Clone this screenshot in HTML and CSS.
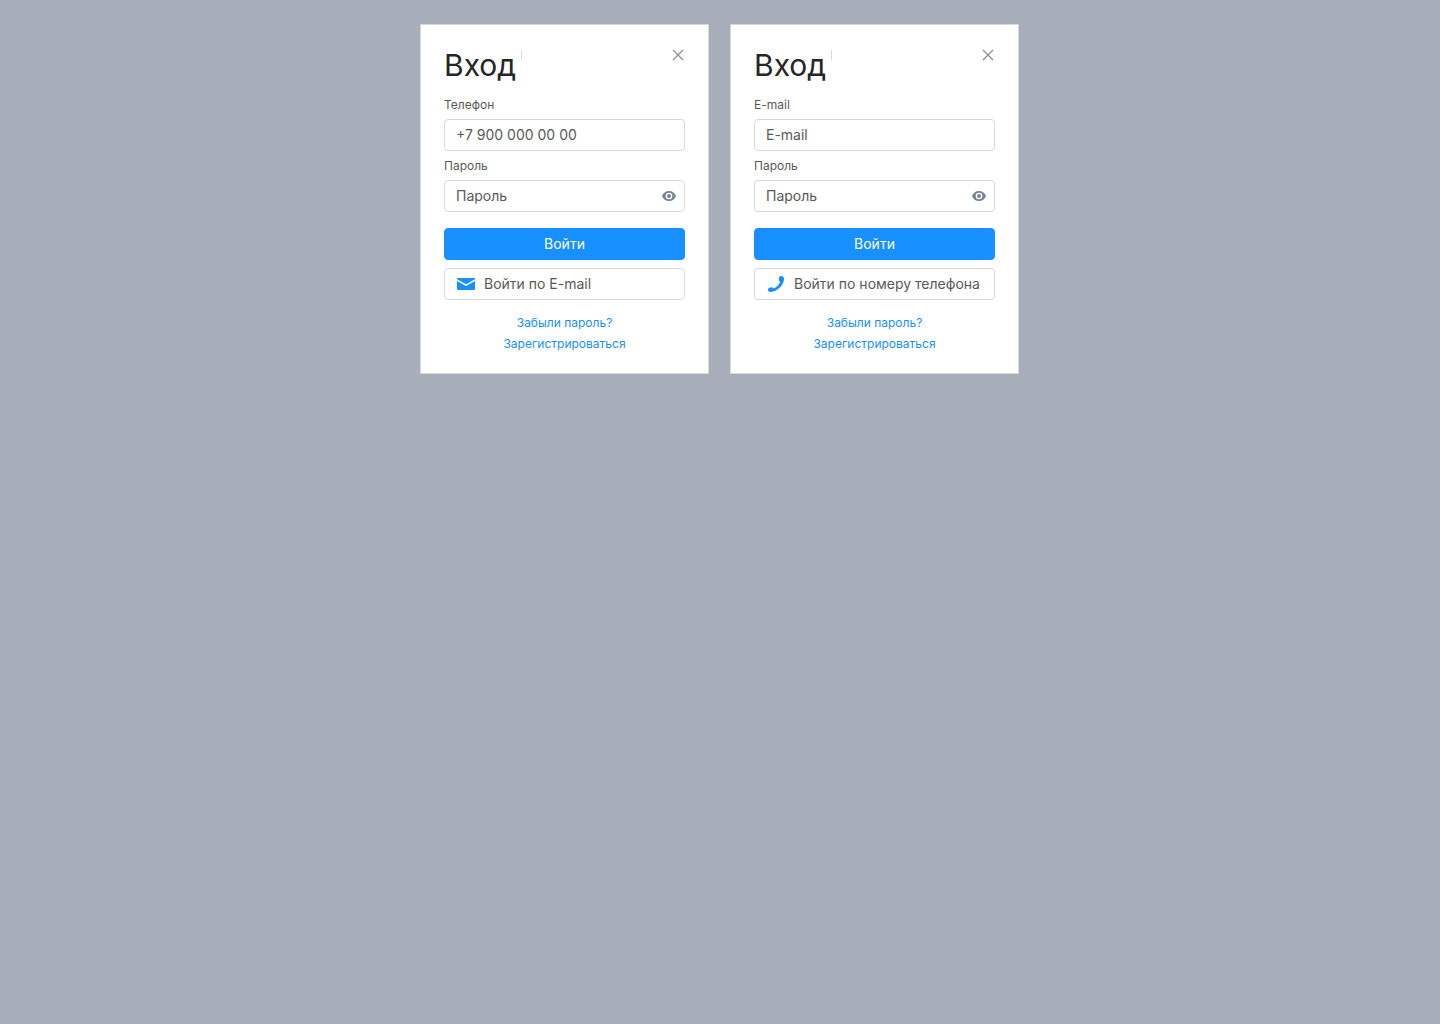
FILE: index.html
```
<!DOCTYPE html>
<html lang="ru">
<head>
    <meta charset="UTF-8">
    <meta name="viewport" content="width=device-width, initial-scale=1.0">
    <title>Вход</title>
    <link rel="stylesheet" href="styles.css">
</head>
<body>

    <main class="container">
        <!-- Login by phone -->
        <form class="card">
            <div class="card-header">
                <h1>Вход</h1>
                <span class="divider"></span>
                <button type="button" class="close-btn" aria-label="Закрыть">
                    <svg width="12" height="12" viewBox="0 0 12 12"><path d="M1 1l10 10M11 1L1 11" fill="none" stroke="currentColor" stroke-width="1.2"/></svg>
                </button>
            </div>

            <div class="field">
                <label for="phone">Телефон</label>
                <input type="tel" id="phone" placeholder="+7 900 000 00 00">
            </div>
            <div class="field">
                <label for="phonePassword">Пароль</label>
                <div class="password">
                    <input type="password" id="phonePassword" placeholder="Пароль">
                    <button type="button" class="eye-btn" aria-label="Показать пароль">
                        <svg width="14" height="10" viewBox="0 0 14 10"><path fill="currentColor" fill-rule="evenodd" d="M7 0C3.600 0 1 2 0 5c1 3 3.600 5 7 5s6-2 7-5c-1-3-3.600-5-7-5zM7 8.300a3.300 3.300 0 1 1 0-6.600 3.300 3.300 0 0 1 0 6.600zM7 3a2 2 0 1 0 0 4 2 2 0 0 0 0-4z"/></svg>
                    </button>
                </div>
            </div>

            <button type="submit" class="btn btn-primary">Войти</button>
            <button type="button" class="btn btn-outline">
                <svg width="20" height="16" viewBox="0 0 20 16"><path fill="currentColor" d="M1 2h18v1.300l-9 5-9-5zM1 4.900l9 5 9-5V13a1 1 0 0 1-1 1H2a1 1 0 0 1-1-1z"/></svg>
                <span>Войти по E-mail</span>
            </button>

            <div class="links">
                <a href="#">Забыли пароль?</a>
                <a href="#">Зарегистрироваться</a>
            </div>
        </form>

        <!-- Login by e-mail -->
        <form class="card">
            <div class="card-header">
                <h1>Вход</h1>
                <span class="divider"></span>
                <button type="button" class="close-btn" aria-label="Закрыть">
                    <svg width="12" height="12" viewBox="0 0 12 12"><path d="M1 1l10 10M11 1L1 11" fill="none" stroke="currentColor" stroke-width="1.2"/></svg>
                </button>
            </div>

            <div class="field">
                <label for="email">E-mail</label>
                <input type="email" id="email" placeholder="E-mail">
            </div>
            <div class="field">
                <label for="emailPassword">Пароль</label>
                <div class="password">
                    <input type="password" id="emailPassword" placeholder="Пароль">
                    <button type="button" class="eye-btn" aria-label="Показать пароль">
                        <svg width="14" height="10" viewBox="0 0 14 10"><path fill="currentColor" fill-rule="evenodd" d="M7 0C3.600 0 1 2 0 5c1 3 3.600 5 7 5s6-2 7-5c-1-3-3.600-5-7-5zM7 8.300a3.300 3.300 0 1 1 0-6.600 3.300 3.300 0 0 1 0 6.600zM7 3a2 2 0 1 0 0 4 2 2 0 0 0 0-4z"/></svg>
                    </button>
                </div>
            </div>

            <button type="submit" class="btn btn-primary">Войти</button>
            <button type="button" class="btn btn-outline">
                <svg width="20" height="16" viewBox="0 0 20 16"><path fill="currentColor" d="M13 1.500c.3-.9 1.300-1.500 2.300-1.500 1.600 0 2.700 1.200 2.700 2.900 0 3.100-1.700 6.300-4.200 8.700C11.200 14.300 7.900 16 4.800 16 3.100 16 2 15.200 2 13.800c0-1 .6-1.700 1.500-2l2-.5c.7-.1 1.200.1 1.600.8l.3.5c1.400-.6 2.800-1.500 4-2.700 1.300-1.300 2.200-2.700 2.800-4.200l-.6-.5c-.6-.4-.9-1-.8-1.700z"/></svg>
                <span>Войти по номеру телефона</span>
            </button>

            <div class="links">
                <a href="#">Забыли пароль?</a>
                <a href="#">Зарегистрироваться</a>
            </div>
        </form>
    </main>

</body>
</html>
```
FILE: styles.css
```
* {
    box-sizing: border-box;
}
body {
    margin: 0;
    font-family: Inter, "Noto Sans", sans-serif;
    font-size: 14px;
    background-color: #a7adb9;
    color: #595959;
}
.container {
    display: flex;
    flex-wrap: wrap;
    justify-content: center;
    gap: 21px;
    padding: 24px 25px 24px 24px;
}
.card {
    width: 289px;
    padding: 23px 23px 19px;
    border: 1px solid #d9d9d9;
    border-radius: 1px;
    background-color: #fff;
}
.card-header {
    display: flex;
    align-items: flex-start;
    margin-bottom: 13px;
}
h1 {
    margin: 0;
    font-size: 30px;
    line-height: 34px;
    font-weight: 400;
    color: #262626;
}
.divider {
    width: 1px;
    height: 10px;
    margin: 2px 0 0 5px;
    background-color: #d9d9d9;
}
button {
    font-family: inherit;
    font-size: 14px;
    cursor: pointer;
}
.close-btn {
    display: flex;
    margin-left: auto;
    padding: 1px;
    border: none;
    background: none;
    color: #8c8c8c;
}
.field {
    margin-bottom: 5px;
}
label {
    display: block;
    margin-bottom: 4px;
    font-size: 12px;
    line-height: 20px;
}
input {
    display: block;
    width: 100%;
    height: 32px;
    padding: 0 11px 2px;
    border: 1px solid #d9d9d9;
    border-radius: 4px;
    font-family: inherit;
    font-size: 14px;
    color: #595959;
    background-color: #fff;
}
input::placeholder {
    color: #595959;
    opacity: 1;
}
.password {
    position: relative;
}
.password input {
    padding-right: 32px;
}
.eye-btn {
    position: absolute;
    top: 0;
    right: 0;
    display: flex;
    align-items: center;
    height: 32px;
    padding: 0 9px;
    border: none;
    background: none;
    color: #778594;
}
.btn {
    display: flex;
    align-items: center;
    width: 100%;
    height: 32px;
    padding: 0 11px 2px;
    border: 1px solid #d9d9d9;
    border-radius: 4px;
}
.btn-primary {
    justify-content: center;
    margin-top: 16px;
    border-color: #1890ff;
    background-color: #1890ff;
    color: #fff;
}
.btn-outline {
    gap: 8px;
    margin-top: 8px;
    padding-bottom: 0;
    background-color: #fff;
    color: #595959;
    white-space: nowrap;
}
.btn-outline span {
    padding-bottom: 2px;
}
.btn-outline svg {
    color: #1890ff;
}
.links {
    display: flex;
    flex-direction: column;
    align-items: center;
    margin-top: 12px;
}
.links a {
    font-size: 12px;
    line-height: 21px;
    color: #1890ff;
    text-decoration: none;
}
.links a:hover {
    text-decoration: underline;
}
```
